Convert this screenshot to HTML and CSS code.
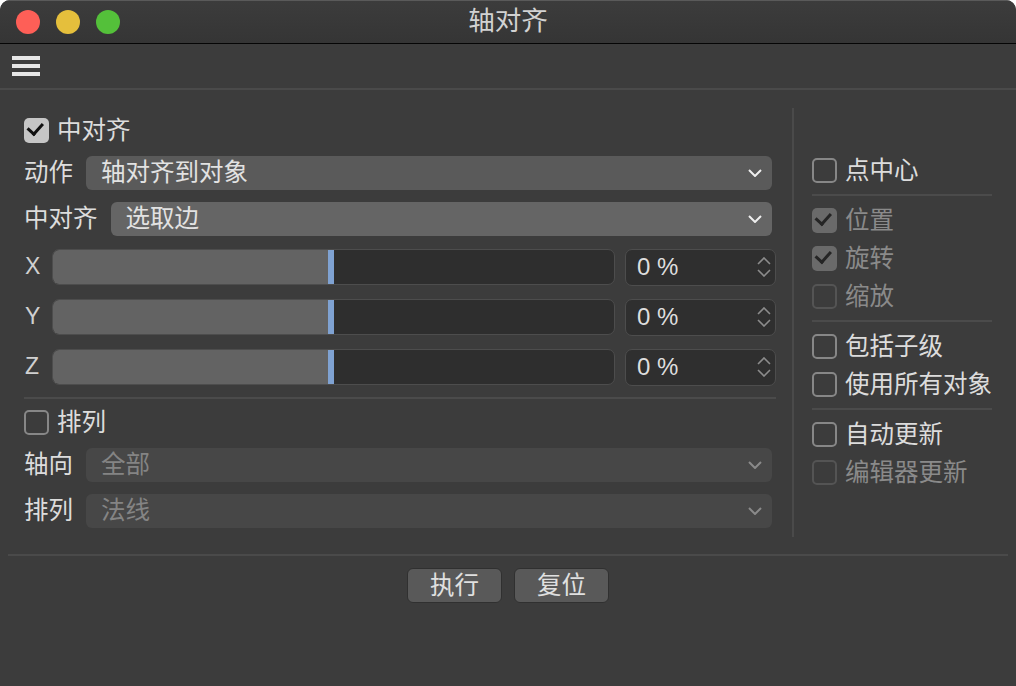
FILE: index.html
```html
<!DOCTYPE html>
<html lang="zh-CN">

<head>
    <meta charset="UTF-8">
    <title>轴对齐</title>
    <link rel="stylesheet" href="styles.css">
</head>

<body>
    <div class="window">
        <!-- title bar -->
        <div class="titlebar">
            <div class="lights">
                <span class="light red"></span>
                <span class="light yellow"></span>
                <span class="light green"></span>
            </div>
            <div class="title">轴对齐</div>
        </div>

        <div class="toolbar">
            <svg class="menu-icon" width="28" height="20" viewBox="0 0 28 20">
                <rect x="0" y="0" width="28" height="4" fill="#e6e6e6" />
                <rect x="0" y="8" width="28" height="4" fill="#e6e6e6" />
                <rect x="0" y="16" width="28" height="4" fill="#e6e6e6" />
            </svg>
        </div>

        <div class="main">
            <div class="panel-left">
                <div class="check-row first">
                    <span class="box checked"></span>
                    <span class="check-text">中对齐</span>
                </div>

                <div class="field-row">
                    <span class="field-label">动作</span>
                    <div class="dropdown">
                        <span>轴对齐到对象</span>
                        <svg class="chev" width="14" height="8" viewBox="0 0 14 8"><path d="M1 1l6 6 6-6" /></svg>
                    </div>
                </div>

                <div class="field-row">
                    <span class="field-label">中对齐</span>
                    <div class="dropdown hover">
                        <span>选取边</span>
                        <svg class="chev" width="14" height="8" viewBox="0 0 14 8"><path d="M1 1l6 6 6-6" /></svg>
                    </div>
                </div>

                <div class="slider-row">
                    <span class="axis">X</span>
                    <div class="track"><div class="fill" style="width: 50%"></div></div>
                    <div class="number">
                        <span>0 %</span>
                        <svg class="stepper" width="14" height="20" viewBox="0 0 14 20"><path d="M1 7l6-6 6 6M1 13l6 6 6-6" /></svg>
                    </div>
                </div>

                <div class="slider-row">
                    <span class="axis">Y</span>
                    <div class="track"><div class="fill" style="width: 50%"></div></div>
                    <div class="number">
                        <span>0 %</span>
                        <svg class="stepper" width="14" height="20" viewBox="0 0 14 20"><path d="M1 7l6-6 6 6M1 13l6 6 6-6" /></svg>
                    </div>
                </div>

                <div class="slider-row">
                    <span class="axis">Z</span>
                    <div class="track"><div class="fill" style="width: 50%"></div></div>
                    <div class="number">
                        <span>0 %</span>
                        <svg class="stepper" width="14" height="20" viewBox="0 0 14 20"><path d="M1 7l6-6 6 6M1 13l6 6 6-6" /></svg>
                    </div>
                </div>

                <div class="sep wide"></div>

                <div class="check-row">
                    <span class="box"></span>
                    <span class="check-text">排列</span>
                </div>

                <div class="field-row">
                    <span class="field-label">轴向</span>
                    <div class="dropdown disabled">
                        <span>全部</span>
                        <svg class="chev" width="14" height="8" viewBox="0 0 14 8"><path d="M1 1l6 6 6-6" /></svg>
                    </div>
                </div>

                <div class="field-row">
                    <span class="field-label">排列</span>
                    <div class="dropdown disabled">
                        <span>法线</span>
                        <svg class="chev" width="14" height="8" viewBox="0 0 14 8"><path d="M1 1l6 6 6-6" /></svg>
                    </div>
                </div>
            </div>

            <div class="panel-right">
                <div class="check-row">
                    <span class="box"></span>
                    <span class="check-text">点中心</span>
                </div>
                <div class="sep"></div>
                <div class="check-row dim">
                    <span class="box checked"></span>
                    <span class="check-text">位置</span>
                </div>
                <div class="check-row dim">
                    <span class="box checked"></span>
                    <span class="check-text">旋转</span>
                </div>
                <div class="check-row dim">
                    <span class="box"></span>
                    <span class="check-text">缩放</span>
                </div>
                <div class="sep"></div>
                <div class="check-row">
                    <span class="box"></span>
                    <span class="check-text">包括子级</span>
                </div>
                <div class="check-row">
                    <span class="box"></span>
                    <span class="check-text">使用所有对象</span>
                </div>
                <div class="sep"></div>
                <div class="check-row">
                    <span class="box"></span>
                    <span class="check-text">自动更新</span>
                </div>
                <div class="check-row dim">
                    <span class="box"></span>
                    <span class="check-text">编辑器更新</span>
                </div>
            </div>
        </div>

        <div class="footer">
            <button class="btn">执行</button>
            <button class="btn">复位</button>
        </div>
    </div>
</body>

</html>
```

FILE: styles.css
```css
body {
    margin: 0;
    background-color: #fff;
    font-family: "Liberation Sans", "Noto Sans CJK SC", sans-serif;
    line-height: 1.2;
    color: #dcdcdc;
}

.window {
    width: 1016px;
    height: 686px;
    background-color: #3c3c3c;
    border-radius: 10px 10px 0 0;
    overflow: hidden;
}

/* title bar */
.titlebar {
    position: relative;
    height: 44px;
    box-sizing: border-box;
    background: linear-gradient(#3c3c3c, #353535);
    border-top: 1px solid #5a5a5a;
    border-bottom: 1px solid #050505;
    display: flex;
    align-items: center;
    justify-content: center;
}

.lights {
    position: absolute;
    left: 16px;
    top: 9px;
    display: flex;
    gap: 16px;
}

.light {
    width: 24px;
    height: 24px;
    border-radius: 50%;
}

.red { background-color: #fe5f57; }
.yellow { background-color: #e5bf3c; }
.green { background-color: #54c03a; }

.title {
    font-size: 26.5px;
    color: #d2d2d2;
    margin-top: -1px;
}

.toolbar {
    height: 46px;
    box-sizing: border-box;
    border-bottom: 2px solid #4a4a4a;
    padding: 12px 0 0 12px;
}

.menu-icon {
    display: block;
}

/* main area */
.main {
    display: flex;
    align-items: flex-start;
    padding: 18px 8px 0 8px;
}

.panel-left {
    width: 752px;
    padding: 10px 16px 0 16px;
}

.panel-right {
    height: 429px;
    box-sizing: border-box;
    border-left: 2px solid #4a4a4a;
    padding: 50px 0 0 18px;
    width: 200px;
}

.check-row {
    display: flex;
    align-items: center;
    gap: 8px;
    height: 25px;
    margin-bottom: 13px;
    font-size: 24.5px;
}

.box {
    width: 25px;
    height: 25px;
    box-sizing: border-box;
    border: 2px solid #878787;
    border-radius: 5px;
    position: relative;
    flex-shrink: 0;
}

.box.checked {
    border: none;
    background-color: #c6c6c6;
}

.box.checked::after {
    content: "";
    position: absolute;
    top: 5px;
    left: 5px;
    width: 12px;
    height: 7px;
    border-left: 3px solid #111;
    border-bottom: 3px solid #111;
    transform: rotate(-48deg);
    transform-origin: 40% 60%;
}

.dim .check-text {
    color: #8a8a8a;
}

.dim .box {
    border-color: #545454;
}

.dim .box.checked {
    background-color: #6a6a6a;
}

.dim .box.checked::after {
    border-color: #252525;
}

.sep {
    height: 2px;
    width: 180px;
    background-color: #4b4b4b;
    margin: -2px 0 12px 0;
}

.sep.wide {
    width: auto;
    margin: -2px 0 11px 0;
}

.field-row {
    display: flex;
    align-items: center;
    gap: 13px;
    margin: 0 4px 12px 0;
    font-size: 24.5px;
}

.field-row + .field-row {
    margin-bottom: 13px;
}

.field-row:last-child {
    margin-bottom: 0;
}

.field-label {
    flex-shrink: 0;
}

.dropdown {
    flex: 1;
    height: 34px;
    background-color: #5a5a5a;
    border-radius: 6px;
    display: flex;
    align-items: center;
    justify-content: space-between;
    padding: 0 10px 0 15px;
    color: #e2e2e2;
}

.dropdown.hover {
    background-color: #656565;
}

.dropdown.disabled {
    background-color: #474747;
    color: #848484;
}

.chev path {
    fill: none;
    stroke: #eeeeee;
    stroke-width: 2;
}

.disabled .chev path {
    stroke: #8a8a8a;
}

/* sliders */
.slider-row {
    display: flex;
    align-items: center;
    height: 36px;
    margin-bottom: 14px;
}

.axis {
    width: 27px;
    font-size: 23px;
    padding-left: 1px;
    color: #d0d0d0;
}

.track {
    flex: 1;
    height: 36px;
    box-sizing: border-box;
    border: 1px solid #4d4d4d;
    border-radius: 7px;
    background-color: #2e2e2e;
    overflow: hidden;
}

.fill {
    height: 100%;
    background-color: #636363;
    border-right: 6px solid #7fa2d2;
    box-sizing: border-box;
}

.number {
    width: 151px;
    height: 37px;
    margin-left: 10px;
    box-sizing: border-box;
    border: 1px solid #4d4d4d;
    border-radius: 7px;
    background-color: #2f2f2f;
    display: flex;
    align-items: center;
    justify-content: space-between;
    padding: 0 4px 0 11px;
    font-size: 24px;
    color: #dedede;
}

.stepper path {
    fill: none;
    stroke: #8c8c8c;
    stroke-width: 1.6;
}

/* footer buttons */
.footer {
    margin: 17px 8px 0 8px;
    border-top: 2px solid #4a4a4a;
    padding-top: 12px;
    display: flex;
    justify-content: center;
    gap: 12px;
}

.btn {
    width: 95px;
    height: 35px;
    background-color: #595959;
    border: 1px solid #303030;
    border-radius: 6px;
    color: #e0e0e0;
    font-family: "Liberation Sans", "Noto Sans CJK SC", sans-serif;
    font-size: 24.5px;
    line-height: 1.2;
    padding: 0;
}
```
